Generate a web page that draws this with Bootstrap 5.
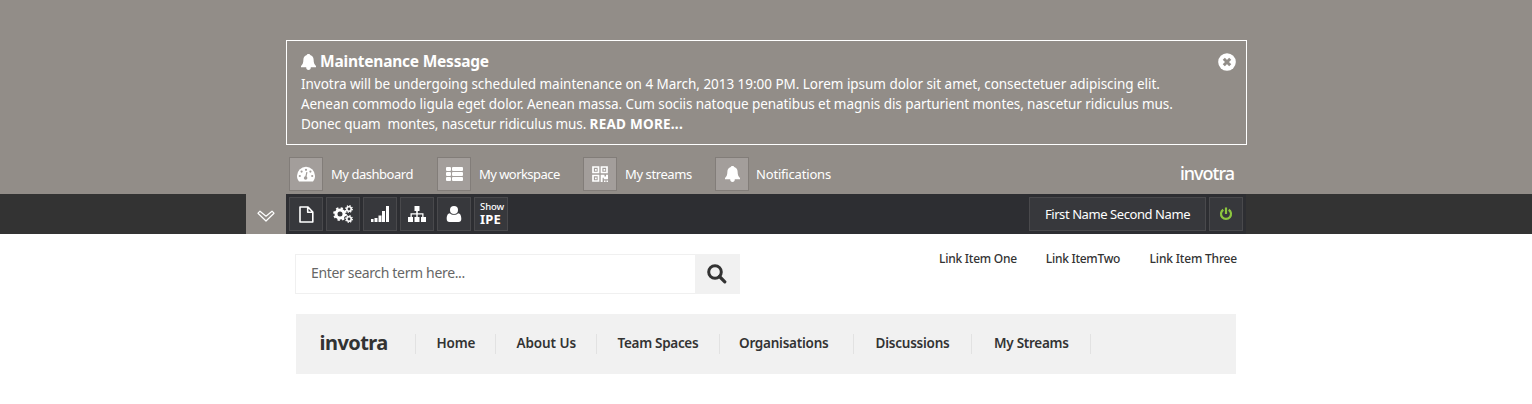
<!DOCTYPE html>
<html lang="en">
<head>
<meta charset="utf-8">
<meta name="viewport" content="width=device-width, initial-scale=1">
<title>invotra</title>
<link href="https://cdn.jsdelivr.net/npm/bootstrap@5.3.0/dist/css/bootstrap.min.css" rel="stylesheet">
<style>
body{font-family:"Noto Sans","Open Sans",sans-serif;background:#fff;color:#333;overflow:hidden}
a{color:inherit;text-decoration:none}
.wrap{width:960px;margin:0 auto}
.topzone{height:194px;background:#928d88;padding-top:40px}
.notice{width:961px;height:105px;border:1px solid #fff;border-radius:0;color:#fff;padding:10px 9px 0 14px;background:none;margin:0}
.notice h1{font-size:15.5px;font-weight:700;line-height:21px;letter-spacing:-.22px;margin:0}
.notice p{font-size:13.5px;line-height:20px;margin:2px 0 0;white-space:pre}
.tile{width:34px;height:34px;border:1px solid #827d79;background:#a39e9b;color:#fff;border-radius:0;padding:0;display:flex;align-items:center;justify-content:center;flex:none}
.quick{height:49px;padding:12px 0 0 3px;color:#fff;font-size:13px}
.quick a{gap:8px;flex:none}
.quick a>b{font-weight:400;padding-top:2px}
.quick .logo{margin:0 12px 0 auto;font-size:18px;font-weight:500;letter-spacing:-1px;line-height:33px}
.darkbar{height:40px;background:#333}
.darkbar .wrap{height:40px;background:#2d2e32;padding:3px 3px 0;gap:3px;color:#fff}
.darkbar .tile{background:#37383c;border-color:#49494c}
.pull{width:40px;height:40px;background:#928d88;margin:-3px 0 0 -43px;padding-top:4px;flex:none}
.darkbar .uname{width:177px;font-size:13px;letter-spacing:-.42px;padding-top:1px}
.darkbar .ipe{flex-direction:column;align-items:flex-start;justify-content:flex-start;padding:2px 0 0 5px}
.ipe small{font-size:9.500px;font-weight:500;letter-spacing:-.1px;line-height:13px}
.ipe b{font-size:13px;line-height:13px;height:14px;letter-spacing:.2px}
.searchbox{width:445px;height:40px;margin:20px 0 0 9px;border:1px solid #f0f0f0}
.searchbox input{border:0;border-radius:0;padding:0 15px 3px;font-size:14px;letter-spacing:-.34px;color:#666;box-shadow:none!important}
.searchbox input::placeholder{color:#666;opacity:1}
.searchbox button{width:45px;flex:none;border:0;border-radius:0;background:#f1f1f1;padding:0 1px 3px 0;margin:-1px -1px -1px 0}
.toplinks{font-size:12px;font-weight:500;margin:15px 9px 0 0;line-height:20px;height:20px}
.mainnav{width:940px;height:60px;margin:20px 0 0 10px;background:#f1f1f1;font-size:13.5px;font-weight:600;padding:20px 0}
.mainnav a{height:20px;line-height:19px;border-right:1px solid #e2e2e2;padding-left:20.5px;white-space:nowrap;flex:none}
.mainnav .brand{font-size:20px;font-weight:700;letter-spacing:-.55px;line-height:18px;width:120px;padding-left:23.5px}
</style>
</head>
<body>
<svg class="d-none">
<symbol id="bell" viewBox="0 0 15 16"><path d="M7.500 0c1 0 1.500.4 1.700 1C11.500 1.600 12.500 3.400 12.600 5.500c.1 3.500.7 5 2.400 6.400v1.300H9.800C9.800 15 9 16 7.500 16s-2.300-1-2.300-2.800H0v-1.300C1.700 10.500 2.300 9 2.400 5.500 2.500 3.400 3.500 1.600 5.800 1 6 .4 6.500 0 7.500 0z"/></symbol>
</svg>
<header class="topzone">
  <div class="wrap">
    <section class="notice position-relative">
      <h1 class="d-flex align-items-center"><svg width="15" height="16" class="me-1" fill="currentColor"><use href="#bell"/></svg>Maintenance Message</h1>
      <p><span style="letter-spacing:-.035px">Invotra will be undergoing scheduled maintenance on 4 March, 2013 19:00 PM. Lorem ipsum dolor sit amet, consectetuer adipiscing elit.</span>
<span style="letter-spacing:-.07px">Aenean commodo ligula eget dolor. Aenean massa. Cum sociis natoque penatibus et magnis dis parturient montes, nascetur ridiculus mus.</span>
<span style="letter-spacing:-.12px">Donec quam&nbsp; montes, nascetur ridiculus mus. <a href="#" class="fw-bold" style="letter-spacing:.25px">READ MORE...</a></span></p>
      <a href="#" class="position-absolute d-flex" style="top:12px;right:10px" aria-label="Close"><svg width="18" height="18"><circle cx="9" cy="9" r="8.800" fill="#fff"/><path d="M5.800 5.800l6.400 6.400M12.200 5.800l-6.400 6.400" stroke="#928d88" stroke-width="3"/></svg></a>
    </section>
    <nav class="quick d-flex align-items-start">
      <a href="#" class="d-flex align-items-center" style="width:148px;letter-spacing:-.47px"><span class="tile"><svg width="20" height="16" viewBox="0 0 20 16"><path d="M3 15.500C1.500 13.700 1 12 1 9.800a9 9 0 0 1 18 0c0 2.200-.5 3.900-2 5.700z" fill="#fff"/><g fill="#a39e9b"><circle cx="3.800" cy="10" r="1.100"/><circle cx="5.600" cy="5.600" r="1.100"/><circle cx="10" cy="3.800" r="1.100"/><circle cx="14.400" cy="5.600" r="1.100"/><circle cx="16.200" cy="10" r="1.100"/><circle cx="9.600" cy="12" r="1.800"/></g><path d="M9.600 12l1.300-5.800" stroke="#a39e9b" stroke-width="1.200"/></svg></span><b>My dashboard</b></a>
      <a href="#" class="d-flex align-items-center" style="width:146px;letter-spacing:-.55px"><span class="tile"><svg width="17" height="14" fill="#fff"><rect width="5" height="4" rx="1"/><rect x="6" width="11" height="4" rx="1"/><rect y="5" width="5" height="4" rx="1"/><rect x="6" y="5" width="11" height="4" rx="1"/><rect y="10" width="5" height="4" rx="1"/><rect x="6" y="10" width="11" height="4" rx="1"/></svg></span><b>My workspace</b></a>
      <a href="#" class="d-flex align-items-center" style="width:132px;letter-spacing:-.4px"><span class="tile"><svg width="16" height="16"><path d="M1 1h5.500v5.500H1zM9.500 1H15v5.500H9.500zM1 9.500h5.500V15H1z" fill="none" stroke="#fff" stroke-width="1.700"/><path d="M3 3h1.700v1.700H3zM11.500 3h1.700v1.700h-1.700zM3 11.500h1.700v1.700H3zM8.700 8.700h3.800v1.800h1.500V8.700h2v4.500h-4.200v-1.500h-1.200V16H8.700zM12 14.400h1.500V16H12zM14.500 14.400H16V16h-1.500z" fill="#fff"/></svg></span><b>My streams</b></a>
      <a href="#" class="d-flex align-items-center" style="letter-spacing:-.18px;gap:7px"><span class="tile"><svg width="15" height="16" fill="currentColor"><use href="#bell"/></svg></span><b>Notifications</b></a>
      <span class="logo">invotra</span>
    </nav>
  </div>
</header>
<div class="darkbar">
  <div class="wrap d-flex">
    <a href="#" class="pull d-flex align-items-center justify-content-center" aria-label="Collapse"><svg width="18" height="12" viewBox="0 0 18 12"><path d="M1 3.200L3 1.200l6 5 6-5 2 2-8 7.800z" fill="none" stroke="#fff" stroke-width="1.200" stroke-linejoin="round"/></svg></a>
    <a href="#" class="tile"><svg width="15" height="17"><path d="M1 1h8l4.800 5V16H1zM8.700 1v5.300h5" fill="none" stroke="#fff" stroke-width="1.600" stroke-linejoin="round"/></svg></a>
    <a href="#" class="tile"><svg width="20" height="18"><g fill="none" stroke="#fff"><circle cx="7" cy="9" r="4" stroke-width="3"/><circle cx="7" cy="9" r="5.900" stroke-width="2" stroke-dasharray="2.320 2.310"/><circle cx="16" cy="4" r="2.200" stroke-width="1.600"/><circle cx="16" cy="4" r="3.300" stroke-width="1.300" stroke-dasharray="1.300 1.290"/><circle cx="16" cy="14" r="2.200" stroke-width="1.600"/><circle cx="16" cy="14" r="3.300" stroke-width="1.300" stroke-dasharray="1.300 1.290"/></g></svg></a>
    <a href="#" class="tile"><svg width="18" height="16" fill="#fff"><path d="M0 13h2.500v3H0zM3.500 12h3v4h-3zM7.500 9.500h3V16h-3zM11 5h3v11h-3zM15 0h3v16h-3z"/></svg></a>
    <a href="#" class="tile"><svg width="18" height="16" fill="#fff"><path d="M6.500 0h5v5H9.800v2.300h5.700V11H18v5h-5v-5h1.200V8.600H9.700V11h1.800v5h-5v-5h1.800V8.600H3.800V11H5v5H0v-5h2.500V7.300h5.700V5H6.500z"/></svg></a>
    <a href="#" class="tile"><svg width="16" height="16" fill="#fff"><circle cx="8" cy="4" r="4"/><path d="M4 7.300C1.500 7.500.7 10 .7 13c0 1.800 1 3 2.800 3h9c1.800 0 2.800-1.200 2.800-3 0-3-.8-5.500-3.300-5.700C10.500 9.300 5.500 9.300 4 7.300z"/></svg></a>
    <a href="#" class="tile ipe"><small>Show</small><b>IPE</b></a>
    <a href="#" class="tile uname ms-auto">First Name Second Name</a>
    <a href="#" class="tile" aria-label="Log out"><svg width="14" height="14"><path d="M4.300 2.700a5 5 0 1 0 5.400 0M7 .5v6.500" fill="none" stroke="#8cc63f" stroke-width="2.200"/></svg></a>
  </div>
</div>
<main class="wrap">
  <div class="d-flex justify-content-between align-items-start">
    <form class="searchbox d-flex"><input class="form-control" type="text" placeholder="Enter search term here..."><button type="button" class="btn" aria-label="Search"><svg width="20" height="20"><circle cx="8" cy="8" r="6.300" fill="none" stroke="#333" stroke-width="3"/><path d="M12.500 12.500l5.300 5.300" stroke="#333" stroke-width="3.200" stroke-linecap="round"/></svg></button></form>
    <nav class="toplinks d-flex"><a href="#" style="letter-spacing:-.25px;margin-right:29px">Link Item One</a><a href="#" style="letter-spacing:-.28px;margin-right:29.500px">Link ItemTwo</a><a href="#" style="letter-spacing:-.18px">Link Item Three</a></nav>
  </div>
  <nav class="mainnav d-flex">
    <a class="brand" href="#">invotra</a>
    <a href="#" style="width:80px;letter-spacing:-.2px">Home</a>
    <a href="#" style="width:101px;letter-spacing:-.09px">About Us</a>
    <a href="#" style="width:123px;letter-spacing:-.3px">Team Spaces</a>
    <a href="#" style="width:134px;letter-spacing:-.24px;padding-left:19px">Organisations</a>
    <a href="#" style="width:118px;letter-spacing:-.22px;padding-left:21.5px">Discussions</a>
    <a href="#" style="width:119px;letter-spacing:-.27px;padding-left:22px">My Streams</a>
  </nav>
</main>
<script src="https://cdn.jsdelivr.net/npm/bootstrap@5.3.0/dist/js/bootstrap.bundle.min.js"></script>
</body>
</html>
